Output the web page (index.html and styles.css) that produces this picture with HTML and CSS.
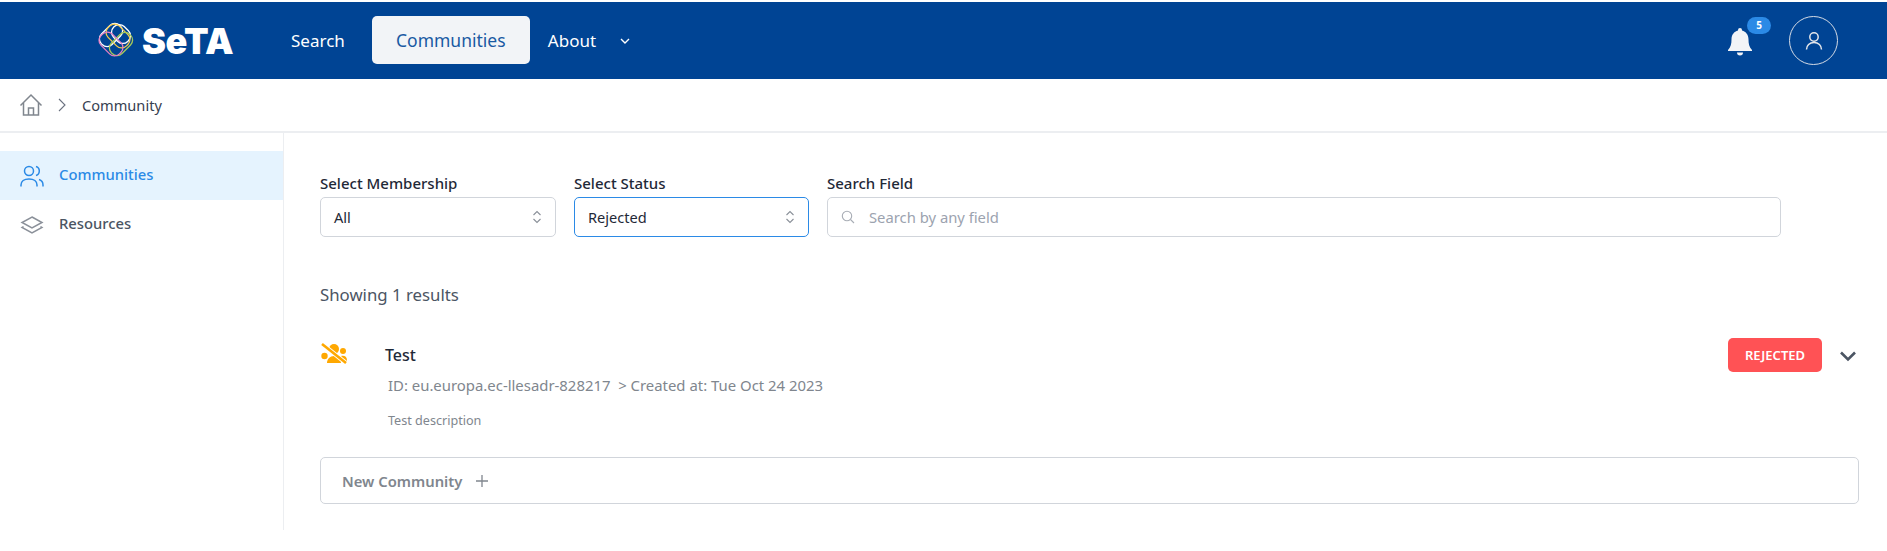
FILE: index.html
```html
<!DOCTYPE html>
<html lang="en">
<head>
  <meta charset="UTF-8" />
  <title>SeTA - Community</title>
  <link rel="stylesheet" href="styles.css">
</head>
<body>

  <header class="topbar">
    <a class="logo">
      <svg class="logo-mark" width="38" height="37" viewBox="0 0 38 37" fill="none" stroke-width="1.300">
        <rect x="2" y="5.500" width="26" height="15" rx="7" stroke="#ffffff" transform="rotate(-45 15 13)"/>
        <rect x="15" y="4.500" width="20" height="15" rx="7" stroke="#ffffff" transform="rotate(45 25 12)"/>
        <rect x="9" y="6" width="26" height="16" rx="7" stroke="#f2c94c" transform="rotate(45 22 14)"/>
        <rect x="12" y="14.500" width="26" height="15" rx="7" stroke="#a5c95a" transform="rotate(-45 25 22)"/>
        <rect x="2" y="14" width="26" height="16" rx="7" stroke="#e77fc3" transform="rotate(45 15 22)"/>
      </svg>
      <span class="logo-text">SeTA</span>
    </a>
    <nav class="nav">
      <a class="nav-link">Search</a>
      <a class="nav-link active">Communities</a>
      <a class="nav-link about">About
        <svg width="12" height="12" viewBox="0 0 12 12" fill="none" stroke="#fff" stroke-width="1.400"><path d="M2 4l4 4 4-4"/></svg>
      </a>
    </nav>
    <div class="topbar-right">
      <div class="bell">
        <svg width="30" height="30" viewBox="0 0 30 30" fill="#f2f4f7">
          <path d="M15 2a2 2 0 0 1 2 2v.6c4 1 6.500 4.400 6.500 8.900 0 4.500.7 7.500 3.500 10.500v1H3v-1c2.800-3 3.500-6 3.500-10.500 0-4.500 2.500-7.900 6.500-8.900V4a2 2 0 0 1 2-2z"/>
          <path d="M12 26.500h6a3 3 0 0 1-6 0z"/>
        </svg>
        <span class="badge">5</span>
      </div>
      <div class="avatar">
        <svg width="20" height="20" viewBox="0 0 20 20" fill="none" stroke="#e5e7eb" stroke-width="1.500">
          <circle cx="10" cy="6" r="4.200"/>
          <path d="M2.500 18.500c0-4 3-7 7.500-7s7.500 3 7.500 7"/>
        </svg>
      </div>
    </div>
  </header>

  <div class="breadcrumb">
    <svg width="24" height="24" viewBox="0 0 24 24" fill="none" stroke="#80868e" stroke-width="1.500">
      <path d="M1.500 12.500L12 2l10.500 10.500"/>
      <path d="M4.500 10v12h15V10"/>
      <path d="M9.500 22v-7h5v7"/>
    </svg>
    <svg class="crumb-sep" width="10" height="14" viewBox="0 0 10 14" fill="none" stroke="#6b7280" stroke-width="1.100"><path d="M2 1l6 6-6 6"/></svg>
    <span>Community</span>
  </div>

  <div class="page">
    <aside class="sidebar">
      <a class="side-item active">
        <svg width="24" height="24" viewBox="0 0 24 24" fill="none" stroke="#2b8ae6" stroke-width="1.500">
          <circle cx="9" cy="7" r="4.500"/>
          <path d="M1 22.500v-1.500c0-3.500 3-6 8-6s8 2.500 8 6v1.500"/>
          <path d="M16 2.500c2 .6 3.300 2.400 3.300 4.500s-1.300 3.900-3.300 4.500"/>
          <path d="M19 15.500c2.500.8 4 2.800 4 5.500v1.500"/>
        </svg>
        <span>Communities</span>
      </a>
      <a class="side-item">
        <svg width="24" height="24" viewBox="0 0 24 24" fill="none" stroke="#8a9099" stroke-width="1.500">
          <path d="M12 4l10 5.500L12 15 2 9.500z"/>
          <path d="M3.500 13.500L2 14.500 12 20l10-5.500-1.500-1"/>
        </svg>
        <span>Resources</span>
      </a>
    </aside>

    <main class="content">
      <div class="filters">
        <div class="field membership">
          <label>Select Membership</label>
          <div class="control">
            All
            <svg class="updown" width="10" height="14" viewBox="0 0 10 14" fill="none" stroke="#8a9099" stroke-width="1.100"><path d="M1.500 5L5 1.500 8.500 5M1.500 9L5 12.500 8.500 9"/></svg>
          </div>
        </div>
        <div class="field status">
          <label>Select Status</label>
          <div class="control focused">
            Rejected
            <svg class="updown" width="10" height="14" viewBox="0 0 10 14" fill="none" stroke="#8a9099" stroke-width="1.100"><path d="M1.500 5L5 1.500 8.500 5M1.500 9L5 12.500 8.500 9"/></svg>
          </div>
        </div>
        <div class="field search">
          <label>Search Field</label>
          <div class="control search-control">
            <svg width="14" height="14" viewBox="0 0 14 14" fill="none" stroke="#a8adb5" stroke-width="1.100"><circle cx="6" cy="6" r="4.700"/><path d="M9.500 9.500L13 13"/></svg>
            <span class="placeholder">Search by any field</span>
          </div>
        </div>
      </div>

      <p class="results">Showing 1 results</p>

      <div class="community">
        <svg class="community-icon" width="26" height="22" viewBox="0 0 26 22" fill="#ffa800">
          <circle cx="13" cy="6" r="5"/>
          <circle cx="22" cy="8" r="3"/>
          <circle cx="3.500" cy="13" r="3.200"/>
          <path d="M6 20c0-4 3-7 7-7s7 3 7 7z"/>
          <path d="M20 13c3-1 6 .5 6 4v1h-4c0-2-1-3.500-2-5z"/>
          <path d="M1 1l24 19" stroke="#fff" stroke-width="4.400" fill="none"/>
          <path d="M1 1l24 19" stroke="#ffa800" stroke-width="2.600" fill="none"/>
        </svg>
        <div class="community-body">
          <h3>Test</h3>
          <div class="meta">ID: eu.europa.ec-llesadr-828217 &nbsp;&gt; Created at: Tue Oct 24 2023</div>
          <div class="desc">Test description</div>
        </div>
        <span class="tag">REJECTED</span>
        <svg class="expand" width="18" height="12" viewBox="0 0 18 12" fill="none" stroke="#4b5563" stroke-width="2.600"><path d="M2 2.500l7 7 7-7"/></svg>
      </div>

      <button class="new-community">New Community
        <svg width="14" height="14" viewBox="0 0 14 14" fill="none" stroke="#80868e" stroke-width="1.300"><path d="M7 1v12M1 7h12"/></svg>
      </button>
    </main>
  </div>

</body>
</html>
```
FILE: styles.css
```css
body {
  margin: 0;
  font-family: "Noto Sans", "Open Sans", sans-serif;
  background-color: #fff;
  color: #1f2937;
  padding-top: 2px;
}

a {
  text-decoration: none;
}

.topbar {
  height: 77px;
  background-color: #004494;
  display: flex;
  align-items: center;
  padding: 0 49px 0 96px;
}

.logo {
  display: flex;
  align-items: center;
  gap: 8px;
  width: 195px;
}

.logo-text {
  font-family: Inter, sans-serif;
  font-weight: 900;
  font-size: 36px;
  letter-spacing: -0.5px;
  color: #fff;
  line-height: 1;
}

.nav {
  display: flex;
  align-items: center;
}

.nav-link {
  color: #fff;
  font-size: 17px;
}

.nav-link.active {
  background-color: #f2f4f7;
  color: #1a5aa3;
  height: 48px;
  width: 158px;
  margin: -2px 18px 0 27px;
  border-radius: 5px;
  display: flex;
  align-items: center;
  justify-content: center;
  font-size: 17.500px;
}

.nav-link.about {
  display: flex;
  align-items: center;
  gap: 23px;
}

.topbar-right {
  margin-left: auto;
  display: flex;
  align-items: center;
  gap: 34px;
}

.bell {
  position: relative;
  width: 30px;
  height: 30px;
}

.badge {
  position: absolute;
  top: -9px;
  left: 22px;
  width: 24px;
  height: 17px;
  border-radius: 9px;
  background-color: #2b8ae6;
  color: #fff;
  font-size: 10px;
  font-weight: 700;
  text-align: center;
  line-height: 17px;
}

.avatar {
  width: 47px;
  height: 47px;
  border: 1px solid #d5dbe5;
  border-radius: 50%;
  display: flex;
  align-items: center;
  justify-content: center;
}

.breadcrumb {
  height: 54px;
  box-sizing: border-box;
  border-bottom: 2px solid #eceef1;
  display: flex;
  align-items: center;
  padding-left: 19px;
  font-size: 14.600px;
  color: #374151;
}

.crumb-sep {
  margin: 0 15px 0 14px;
}

.page {
  display: flex;
  min-height: 397px;
}

.sidebar {
  width: 284px;
  flex-shrink: 0;
  box-sizing: border-box;
  border-right: 1px solid #eceef1;
  padding-top: 18px;
}

.side-item {
  height: 49px;
  display: flex;
  align-items: center;
  gap: 15px;
  padding-left: 20px;
  font-size: 14.800px;
  font-weight: 500;
  color: #4b5563;
}

.side-item span {
  margin-bottom: 3px;
}

.side-item.active {
  background-color: #e5f3fe;
  color: #2b8ae6;
}

.content {
  flex: 1;
  padding: 40px 28px 0 36px;
}

.filters {
  display: flex;
  gap: 18px;
}

.field label {
  display: block;
  font-size: 15px;
  font-weight: 500;
  line-height: 20px;
  margin-bottom: 4px;
  color: #1f2937;
}

.membership {
  width: 236px;
}

.status {
  width: 235px;
}

.search {
  width: 954px;
}

.control {
  height: 40px;
  box-sizing: border-box;
  border: 1px solid #d1d5db;
  border-radius: 5px;
  display: flex;
  align-items: center;
  justify-content: space-between;
  padding: 0 13px;
  font-size: 14.600px;
  color: #1f2937;
}

.control.focused {
  border-color: #2b8ae6;
}

.search-control {
  justify-content: flex-start;
  gap: 14px;
  font-size: 14.800px;
}

.placeholder {
  color: #9ca3af;
}

.results {
  margin: 46px 0 0;
  font-size: 16.800px;
  line-height: 24px;
  color: #4b5563;
}

.community {
  display: flex;
  align-items: flex-start;
  margin-top: 36px;
  height: 114px;
}

.community-icon {
  margin: 0 38px 0 1px;
  flex-shrink: 0;
}

.community-body {
  flex: 1;
}

.community-body h3 {
  margin: 0;
  font-size: 16px;
  font-weight: 500;
  line-height: 24px;
  color: #1f2937;
}

.meta {
  margin: 6px 0 0 3px;
  font-size: 14.900px;
  line-height: 24px;
  color: #80868e;
}

.desc {
  margin: 14px 0 0 3px;
  font-size: 12.600px;
  line-height: 20px;
  color: #80868e;
}

.tag {
  background-color: #ff5255;
  color: #fff;
  width: 94px;
  height: 34px;
  border-radius: 5px;
  font-size: 13px;
  font-weight: 600;
  display: flex;
  align-items: center;
  justify-content: center;
  margin-top: -5px;
}

.expand {
  margin: 7px 2px 0 17px;
}

.new-community {
  width: 100%;
  height: 47px;
  background-color: #fff;
  border: 1px solid #d1d5db;
  border-radius: 5px;
  display: flex;
  align-items: center;
  gap: 13px;
  padding: 0 21px;
  font-family: inherit;
  font-size: 14.800px;
  font-weight: 600;
  color: #80868e;
}
```
